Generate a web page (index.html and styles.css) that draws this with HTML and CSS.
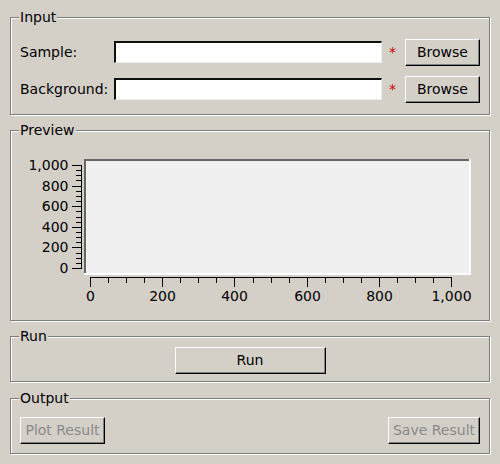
FILE: index.html
```html
<!DOCTYPE html>
<html>
<head>
<meta charset="utf-8">
<link rel="stylesheet" href="styles.css">
</head>
<body>
<div class="window">
  <div class="group input">
    <span class="title">Input</span>
    <span class="label">Sample:</span>
    <div class="field"></div>
    <span class="req">*</span>
    <button class="btn">Browse</button>
    <span class="label">Background:</span>
    <div class="field"></div>
    <span class="req">*</span>
    <button class="btn">Browse</button>
  </div>

  <div class="group preview">
    <span class="title">Preview</span>
    <svg class="chart" width="478" height="189" viewBox="0 0 478 189">
      <rect x="73" y="28" width="387" height="116" fill="#f0f0f0"/>
      <rect x="73" y="28" width="385" height="2" fill="#666"/>
      <rect x="73" y="28" width="2" height="114" fill="#666"/>
      <rect x="73" y="142" width="387" height="2" fill="#fff"/>
      <rect x="458" y="28" width="2" height="116" fill="#fff"/>

      <g fill="#000">
        <rect x="70" y="34" width="1" height="104"/>
        <rect x="61" y="137" width="10" height="1"/>
        <rect x="65" y="132" width="6" height="1"/>
        <rect x="65" y="127" width="6" height="1"/>
        <rect x="65" y="122" width="6" height="1"/>
        <rect x="61" y="116" width="10" height="1"/>
        <rect x="65" y="111" width="6" height="1"/>
        <rect x="65" y="106" width="6" height="1"/>
        <rect x="65" y="101" width="6" height="1"/>
        <rect x="61" y="96" width="10" height="1"/>
        <rect x="65" y="91" width="6" height="1"/>
        <rect x="65" y="86" width="6" height="1"/>
        <rect x="65" y="80" width="6" height="1"/>
        <rect x="61" y="75" width="10" height="1"/>
        <rect x="65" y="70" width="6" height="1"/>
        <rect x="65" y="65" width="6" height="1"/>
        <rect x="65" y="60" width="6" height="1"/>
        <rect x="61" y="55" width="10" height="1"/>
        <rect x="65" y="49" width="6" height="1"/>
        <rect x="65" y="44" width="6" height="1"/>
        <rect x="65" y="39" width="6" height="1"/>
        <rect x="61" y="34" width="10" height="1"/>

        <rect x="79" y="146" width="362" height="1"/>
        <rect x="79" y="146" width="1" height="10"/>
        <rect x="97" y="146" width="1" height="6"/>
        <rect x="115" y="146" width="1" height="6"/>
        <rect x="133" y="146" width="1" height="6"/>
        <rect x="151" y="146" width="1" height="10"/>
        <rect x="169" y="146" width="1" height="6"/>
        <rect x="187" y="146" width="1" height="6"/>
        <rect x="205" y="146" width="1" height="6"/>
        <rect x="223" y="146" width="1" height="10"/>
        <rect x="242" y="146" width="1" height="6"/>
        <rect x="260" y="146" width="1" height="6"/>
        <rect x="278" y="146" width="1" height="6"/>
        <rect x="296" y="146" width="1" height="10"/>
        <rect x="314" y="146" width="1" height="6"/>
        <rect x="332" y="146" width="1" height="6"/>
        <rect x="350" y="146" width="1" height="6"/>
        <rect x="368" y="146" width="1" height="10"/>
        <rect x="386" y="146" width="1" height="6"/>
        <rect x="404" y="146" width="1" height="6"/>
        <rect x="422" y="146" width="1" height="6"/>
        <rect x="440" y="146" width="1" height="10"/>
      </g>

      <g class="ylab">
        <text x="57.5" y="39">1,000</text>
        <text x="57.5" y="60">800</text>
        <text x="57.5" y="80">600</text>
        <text x="57.5" y="101">400</text>
        <text x="57.5" y="121">200</text>
        <text x="57.5" y="142">0</text>
      </g>
      <g class="xlab">
        <text x="79.5" y="170">0</text>
        <text x="151.5" y="170">200</text>
        <text x="223.5" y="170">400</text>
        <text x="296.5" y="170">600</text>
        <text x="368.5" y="170">800</text>
        <text x="440.5" y="170">1,000</text>
      </g>
    </svg>
  </div>

  <div class="group run">
    <span class="title">Run</span>
    <button class="btn run-btn">Run</button>
  </div>

  <div class="group output">
    <span class="title">Output</span>
    <button class="btn plot-btn" disabled>Plot Result</button>
    <button class="btn save-btn" disabled>Save Result</button>
  </div>
</div>
</body>
</html>
```
FILE: styles.css
```css
html, body {
  margin: 0;
  padding: 0;
  background: #d4d0c8;
}

body {
  width: 500px;
  height: 464px;
  overflow: hidden;
  font-family: "DejaVu Sans", "Liberation Sans", sans-serif;
  font-size: 14px;
  color: #000;
}

.window {
  display: flex;
  flex-direction: column;
  gap: 15px;
  padding: 17px 10px 0 10px;
}

.group {
  position: relative;
  border: 1px solid #7c7c7c;
  box-shadow: inset 1px 1px 0 #fff, 1px 1px 0 #fff;
}

.title {
  position: absolute;
  left: 8px;
  top: -9px;
  padding: 0 1px;
  line-height: 16px;
  background: #d4d0c8;
  white-space: nowrap;
}

.input {
  display: grid;
  grid-template-columns: 94px 1fr 23px 75px;
  grid-auto-rows: 27px;
  row-gap: 10px;
  padding: 21px 9px 11px 9px;
}

.label {
  align-self: center;
  padding-bottom: 2px;
  white-space: nowrap;
}

.field {
  box-sizing: border-box;
  height: 22px;
  margin-top: 2px;
  background: #fff;
  border-style: solid;
  border-width: 2px 1px 1px 2px;
  border-color: #111 #ececec #ececec #111;
}

.req {
  align-self: center;
  padding-left: 7px;
  padding-bottom: 2px;
  color: #cc0000;
}

.btn {
  box-sizing: border-box;
  height: 27px;
  margin: 0;
  padding: 0 0 2px 0;
  font-family: inherit;
  font-size: 14px;
  line-height: 16px;
  color: #000;
  background: #d4d0c8;
  border: 1px solid;
  border-color: #fff #000 #000 #fff;
  box-shadow: inset -1px -1px 0 #808080;
  border-radius: 0;
}

.btn:disabled {
  color: #8a8a8a;
}

.preview {
  height: 189px;
}

.chart {
  display: block;
}

.chart text {
  font-family: "DejaVu Sans", "Liberation Sans", sans-serif;
  font-size: 14px;
  fill: #000;
}

.ylab text {
  text-anchor: end;
}

.xlab text {
  text-anchor: middle;
}

.run {
  display: flex;
  justify-content: center;
  padding: 10px 0 7px 0;
}

.run-btn {
  width: 151px;
}

.output {
  display: flex;
  justify-content: space-between;
  padding: 18px 9px 9px 9px;
  margin-top: 1px;
}

.plot-btn {
  width: 85px;
}

.save-btn {
  width: 92px;
}
```
